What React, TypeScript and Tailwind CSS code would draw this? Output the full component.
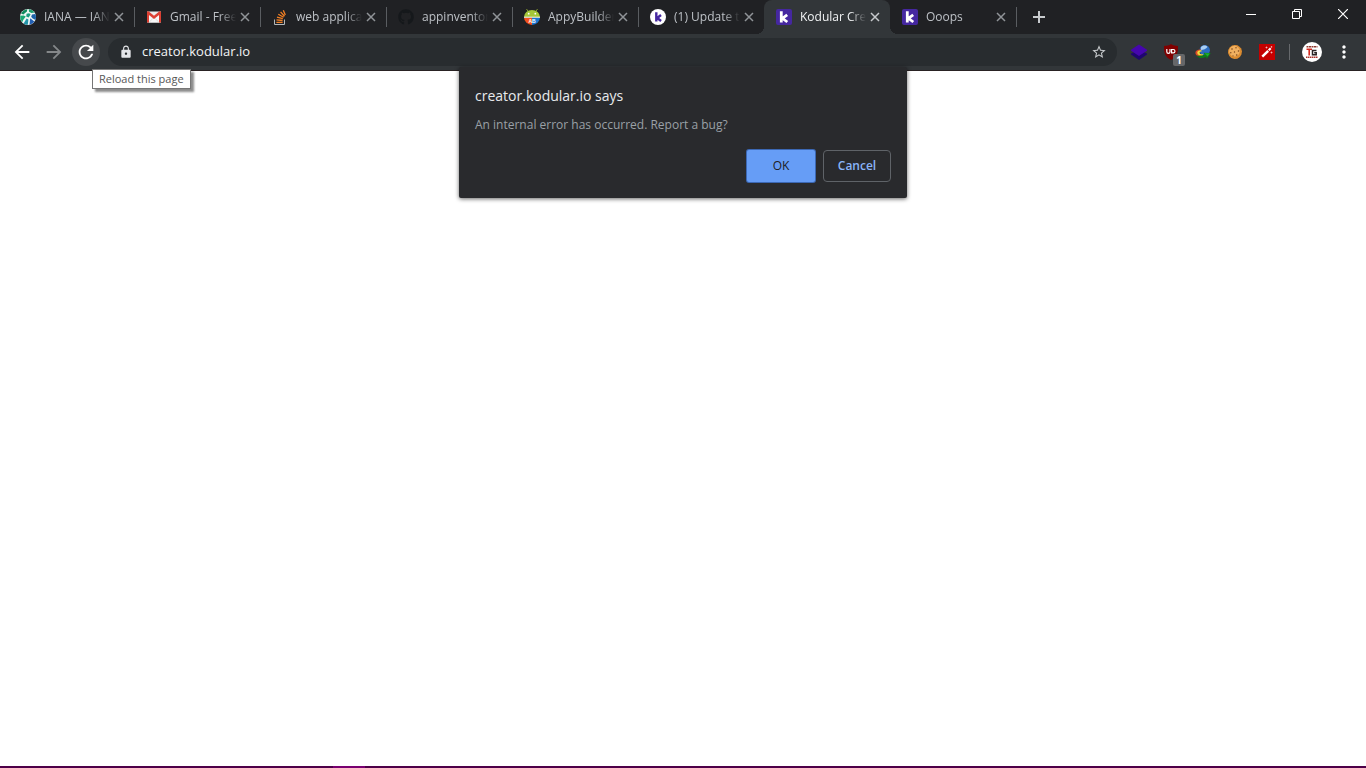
import type { ReactNode } from "react"
import { FaGithub } from "react-icons/fa"
import { MdArrowBack, MdArrowForward, MdLock, MdMoreVert, MdRefresh, MdStarBorder } from "react-icons/md"

interface Tab {
  title: string
  icon: ReactNode
  active?: boolean
  divider?: boolean
}

interface Extension {
  name: string
  icon: ReactNode
}

/* ---------- favicons ---------- */

function IanaIcon() {
  return (
    <svg viewBox="0 0 16 16" className="h-4 w-4">
      <circle cx="8" cy="8" r="8" fill="#eef7f5" />
      <path d="M1 4.600C2.300 2 4.600.5 7.400.2L6.800 2.600 3.400 5.400z" fill="#0f8a5f" />
      <path d="M8.800.2c2.400.2 4.400 1.300 5.800 3.200L11.400 4 9 2.800z" fill="#1fa06f" />
      <path d="M.2 6.800l3.400-.2 2.200 1L3.200 11l-1 2.200C.8 11.400 0 9.200.2 6.800z" fill="#18a874" />
      <path d="M6.600 4.800l2.600-.6 1.400 1.400-2 2.800-2.400-1z" fill="#1b9a80" />
      <path d="M12 5.600l3.300-.6c.8 1.900.9 4 .1 6l-3-1.800-1.200-1.400z" fill="#1c62a8" />
      <path d="M6.600 9.400l1.800 1-.6 5.400c-1.600 0-3-.5-4.200-1.400z" fill="#2193a8" />
      <path d="M10.200 9.200l4.200 3.400c-1.200 1.700-2.900 2.800-4.900 3.200z" fill="#2360b4" />
    </svg>
  )
}

function GmailIcon() {
  return (
    <svg viewBox="0 0 16 16" className="h-4 w-4">
      <path d="M1 2.500h14v11H1z" fill="#ececec" />
      <path d="M3 13.500V6l5 4 5-4v7.500z" fill="#f8f8f8" />
      <path d="M3 13.500l4-4.300M13 13.500L9 9.200" stroke="#cfcfcf" strokeWidth=".7" />
      <path d="M1 13.500V3.200c0-.9 1.100-1.200 1.800-.7L8 6.700l5.200-4.200c.7-.5 1.800-.2 1.800.7v10.300h-2V5.900L8 9.900 3 5.900v7.600z" fill="#dc4033" />
    </svg>
  )
}

function StackIcon() {
  return (
    <svg viewBox="0 0 16 16" className="h-4 w-4" fill="none">
      <path d="M2.500 10.500v5h10v-5" stroke="#b4b8bb" />
      <path
        d="M4.400 13.300h6.200M4.500 10.800l6.100.7M5 8.100l5.800 1.600M6.300 5.300l5.300 3M8.600 2.900l3.900 4.300M11.300 1.200l2 4.800"
        stroke="#f48024"
        strokeWidth="1.300"
      />
    </svg>
  )
}

function AppyIcon() {
  return (
    <svg viewBox="0 0 16 16" className="h-4 w-4">
      <path d="M2.500 0l2 3M13.500 0l-2 3" stroke="#8da42d" strokeWidth=".9" />
      <path d="M0 8a8 7 0 0 1 16 0z" fill="#a4c639" />
      <path d="M0 8.600h8V16A8 7.600 0 0 1 0 8.600z" fill="#f4511e" />
      <path d="M8 8.600h8A8 7.600 0 0 1 8 16z" fill="#1976d2" />
      <path d="M0 7.700h16v1.100H0z" fill="#f1f3e8" />
      <circle cx="4.700" cy="4.700" r=".9" fill="#fff" />
      <circle cx="11.300" cy="4.700" r=".9" fill="#fff" />
      <text x="4.500" y="14" fontSize="5" fontWeight="700" fill="#fff" fontFamily="Liberation Sans, sans-serif">
        AB
      </text>
    </svg>
  )
}

function KodularIcon({ round = false }: { round?: boolean }) {
  return (
    <svg viewBox="0 0 16 16" className="h-4 w-4">
      <rect width="16" height="16" rx={round ? 8 : 2} fill={round ? "#fff" : "#4527a0"} />
      <path
        d={round ? "M6.300 3.200v9.300M11 6L7.200 9l3.900 3" : "M5.300 2.300v11.200M11.200 5.800L6.400 9.300l4.900 3.700"}
        fill="none"
        stroke={round ? "#4527a0" : "#fff"}
        strokeWidth={round ? 2.400 : 2.800}
      />
    </svg>
  )
}

/* ---------- extension icons ---------- */

function LayersIcon() {
  return (
    <svg viewBox="0 0 16 16" className="h-4 w-4">
      <path d="M0 9.500L8 6l8 3.500v1L8 16l-8-5.500z" fill="#1f0670" />
      <path d="M0 5.700L8 .5l8 5.200v1L8 12 0 6.700z" fill="#4606ae" />
    </svg>
  )
}

function ShieldIcon() {
  return (
    <span className="relative block h-4 w-4">
      <svg viewBox="0 0 16 16" className="h-4 w-4">
        <path d="M8 0c2 1.400 4.300 1.900 7 2 .2 6-.8 11-7 14C1.800 13 .8 8 1 2c2.700-.1 5-.6 7-2z" fill="#800000" />
        <path
          d="M3.800 5v2.700a1.500 1.500 0 0 0 3.200 0V5M8.600 5.500v3.300h1.700a1.600 1.600 0 0 0 0-3.300z"
          fill="none"
          stroke="#fff"
          strokeWidth="1.200"
        />
      </svg>
      <span className="absolute left-2.5 top-2.5 flex h-3 w-3 items-center justify-center rounded-xs bg-[#666769] text-[10px] font-bold leading-3 text-white">
        1
      </span>
    </span>
  )
}

function DownloadIcon() {
  return (
    <svg viewBox="0 0 16 16" className="h-4 w-4">
      <circle cx="9.700" cy="6.200" r="5.200" fill="#2c6cc0" />
      <path d="M5.800 3.400C7.500 1 11 1 12.500 3c-1.500 2.200-4 2.800-6.500 3z" fill="#a9cdf2" />
      <path d="M6 5.500C2.500 5.300.3 6.800.4 9c.2 2.400 3 4 6.600 3.800l1-1.300C5 11.700 2.600 10.700 2.700 9c0-1.500 1.500-2.200 3.500-2.200z" fill="#e04a28" />
      <path d="M6.500 6.300C4 6 2 7.200 2.200 9c.2 1.700 2.500 2.900 5.300 2.700l.8-1.400C6.500 10.500 4.500 10 4.600 8.800c0-.9 1-1.400 2-1.400z" fill="#f0dc3a" />
      <path d="M1.200 11c1.800 3.300 6 4 9.800 2l.8 1.900 4-6-7.200-.2 1 1.900c-2.800 1.400-6 1.800-8.400.4z" fill="#0d7a1a" />
      <path d="M9.500 9.300l5.300.1-2.200 3z" fill="#1fae2c" />
    </svg>
  )
}

function CookieIcon() {
  return (
    <svg viewBox="0 0 16 16" className="h-4 w-4">
      <path d="M8 1l2.500.3 2 1.400 1.700 1.900.8 2.900-.6 3-1.500 2.600-2.600 1.600-3 .3-3-1-2-2L1 9l.2-3 1.500-2.600L5 1.600z" fill="#dc8c30" />
      <circle cx="7.500" cy="7.200" r="5.400" fill="#f0b060" />
      <g fill="#7a451c">
        <circle cx="5" cy="5" r=".8" />
        <circle cx="9" cy="3.800" r=".7" />
        <circle cx="11.500" cy="7" r=".8" />
        <circle cx="7.500" cy="8" r=".7" />
        <circle cx="3.800" cy="8.800" r=".7" />
        <circle cx="9.700" cy="11" r=".8" />
        <circle cx="6" cy="11.800" r=".6" />
      </g>
    </svg>
  )
}

function WandIcon() {
  return (
    <svg viewBox="0 0 16 16" className="h-4 w-4">
      <path d="M0 0h16v16H0z" fill="#c40000" />
      <path d="M3.300 12.700L9.200 6.800" stroke="#fff" strokeWidth="2.400" />
      <path d="M9.700 6.300l2-2" stroke="#fff" strokeWidth="2.200" />
      <path d="M7.500 2.500v2M6.500 3.500h2M12.500 2.100v1.600M11.700 2.900h1.600M12.500 7.500v2M11.500 8.500h2" stroke="#f6caca" strokeWidth=".7" />
    </svg>
  )
}

function AvatarIcon() {
  return (
    <svg viewBox="0 0 20 20" className="h-5 w-5">
      <circle cx="10" cy="10" r="10" fill="#fff" />
      <path d="M4.500 4.800h11" stroke="#8e3a30" strokeWidth="1.400" strokeDasharray="2 .5" />
      <path d="M4.500 7.300h5.500M7.200 7.300v6.200" stroke="#d5281d" strokeWidth="1.600" />
      <path d="M14.500 8.600h-4v4.200h3.700v-2h-2" fill="none" stroke="#282424" strokeWidth="1.500" />
      <path d="M4 15.200h12" stroke="#a83028" strokeWidth="1.400" strokeDasharray="1.500 .5" />
    </svg>
  )
}

const TABS: Tab[] = [
  { title: "IANA — IAN", icon: <IanaIcon />, divider: true },
  { title: "Gmail - Free", icon: <GmailIcon />, divider: true },
  { title: "web applica", icon: <StackIcon />, divider: true },
  { title: "appinventor", icon: <FaGithub className="h-4 w-4 text-[#15181b]" />, divider: true },
  { title: "AppyBuilder", icon: <AppyIcon />, divider: true },
  { title: "(1) Update t", icon: <KodularIcon round /> },
  { title: "Kodular Cre", icon: <KodularIcon />, active: true },
  { title: "Ooops", icon: <KodularIcon />, divider: true },
]

const EXTENSIONS: Extension[] = [
  { name: "Layers", icon: <LayersIcon /> },
  { name: "uBlock", icon: <ShieldIcon /> },
  { name: "Download manager", icon: <DownloadIcon /> },
  { name: "Cookies", icon: <CookieIcon /> },
  { name: "Magic wand", icon: <WandIcon /> },
]

function TabItem({ tab }: { tab: Tab }) {
  return (
    <div
      className={`relative flex h-full w-[126px] shrink-0 items-center pl-3 pr-2.5 ${
        tab.active ? "rounded-t-lg bg-[#323639] text-[#f1f3f4]" : "text-[#bdc1c6]"
      }`}
    >
      {tab.active && (
        <>
          <span className="absolute -left-2 bottom-0 h-2 w-2 bg-[radial-gradient(circle_at_0_0,transparent_8px,#323639_8px)]" />
          <span className="absolute -right-2 bottom-0 h-2 w-2 bg-[radial-gradient(circle_at_100%_0,transparent_8px,#323639_8px)]" />
        </>
      )}
      <button type="button" className="flex min-w-0 flex-1 items-center gap-2 text-left">
        <span className="shrink-0">{tab.icon}</span>
        <span className="min-w-0 flex-1 overflow-hidden whitespace-nowrap text-xs mask-r-from-75% mask-r-to-100%">
          {tab.title}
        </span>
      </button>
      <button type="button" aria-label={`Close ${tab.title}`} className="ml-1 shrink-0">
        <svg viewBox="0 0 10 10" className="h-2.5 w-2.5">
          <path
            d="M1 1l8 8M9 1L1 9"
            strokeWidth="1.500"
            className={tab.active ? "stroke-[#c6c9cc]" : "stroke-[#909498]"}
          />
        </svg>
      </button>
      {tab.divider && <span className="absolute right-0 -mr-px h-5 w-px bg-[#5a5d61]" />}
    </div>
  )
}

function TabStrip() {
  return (
    <div className="flex h-[34px] bg-[#202124] pl-2">
      {TABS.map((tab) => (
        <TabItem key={tab.title} tab={tab} />
      ))}
      <button type="button" aria-label="New tab" className="ml-[17px] flex items-center">
        <svg viewBox="0 0 12 12" className="h-3 w-3">
          <path d="M6 0v12M0 6h12" stroke="#c8cbce" strokeWidth="2" />
        </svg>
      </button>
      <div className="ml-auto flex h-7">
        <button type="button" aria-label="Minimize" className="flex w-[46px] items-center justify-center">
          <svg viewBox="0 0 10 10" className="h-2.5 w-2.5">
            <path d="M0 5.500h10" stroke="#fff" />
          </svg>
        </button>
        <button type="button" aria-label="Restore" className="flex w-[46px] items-center justify-center">
          <svg viewBox="0 0 10 10" className="h-2.5 w-2.5" fill="none">
            <path d="M.5 2.500h7v7h-7zM2.500 2.500v-2h7v7h-2" stroke="#fff" />
          </svg>
        </button>
        <button type="button" aria-label="Close window" className="flex w-[46px] items-center justify-center">
          <svg viewBox="0 0 10 10" className="h-2.5 w-2.5">
            <path d="M0 0l10 10M10 0L0 10" stroke="#fff" strokeWidth="1.200" />
          </svg>
        </button>
      </div>
    </div>
  )
}

function Toolbar() {
  return (
    <div className="flex h-[37px] items-center border-b border-[#292223] bg-[#323639] pl-2 pr-3">
      <div className="flex items-center gap-1">
        <button type="button" aria-label="Back" className="flex h-7 w-7 items-center justify-center text-white">
          <MdArrowBack className="h-[22px] w-[22px]" />
        </button>
        <button type="button" aria-label="Forward" className="flex h-7 w-7 items-center justify-center text-[#85888a]">
          <MdArrowForward className="h-[22px] w-[22px]" />
        </button>
        <div className="relative">
          <button
            type="button"
            aria-label="Reload"
            aria-describedby="reload-tip"
            className="flex h-7 w-7 items-center justify-center rounded-full bg-[#46494c] text-white"
          >
            <MdRefresh className="h-[22px] w-[22px]" />
          </button>
          <div
            id="reload-tip"
            role="tooltip"
            className="absolute left-5 top-[31px] z-10 h-5 whitespace-nowrap border border-[#767676] bg-white px-1.5 text-[11px] leading-[18px] text-[#575757] shadow-[3px_3px_2px_rgba(0,0,0,0.45)]"
          >
            Reload this page
          </div>
        </div>
      </div>

      <div className="ml-2 flex h-7 min-w-0 flex-1 items-center rounded-full bg-[#282c2f] pl-[11px] pr-2.5">
        <MdLock className="h-3.5 w-3.5 shrink-0 text-[#e4e6e9]" />
        <input
          type="text"
          aria-label="Address"
          defaultValue="creator.kodular.io"
          className="ml-[9px] min-w-0 flex-1 bg-transparent text-[13px] text-[#f4f5f6] outline-none"
        />
        <button type="button" aria-label="Bookmark this page" className="text-[#c6c9cc]">
          <MdStarBorder className="h-4 w-4" />
        </button>
      </div>

      <div className="ml-1.5 flex items-center">
        {EXTENSIONS.map((ext) => (
          <button key={ext.name} type="button" aria-label={ext.name} className="flex w-8 items-center justify-center">
            {ext.icon}
          </button>
        ))}
        <span className="ml-1.5 h-4 w-px bg-[#66696c]" />
        <button type="button" aria-label="Profile" className="ml-3">
          <AvatarIcon />
        </button>
        <button type="button" aria-label="Menu" className="ml-3 text-white">
          <MdMoreVert className="h-5 w-5" />
        </button>
      </div>
    </div>
  )
}

function AlertDialog() {
  return (
    <div
      role="alertdialog"
      aria-labelledby="alert-title"
      aria-describedby="alert-text"
      className="absolute -top-1 left-1/2 w-[448px] -translate-x-1/2 rounded-xs bg-[#292a2d] px-4 pb-4 pt-[18px] shadow-[0_1px_4px_rgba(0,0,0,0.6)]"
    >
      <h1 id="alert-title" className="text-sm leading-[22px] text-[#e8eaed]">
        creator.kodular.io says
      </h1>
      <p id="alert-text" className="mt-2 text-xs leading-5 text-[#9aa0a6]">
        An internal error has occurred. Report a bug?
      </p>
      <div className="mt-[15px] flex justify-end gap-2 text-xs">
        <button
          type="button"
          className="h-8 w-[68px] rounded-xs bg-[#669df6] text-[#202124] ring-1 ring-[#3c68b4]"
        >
          OK
        </button>
        <button
          type="button"
          className="h-8 w-[68px] rounded-sm border border-[#5f6368] font-semibold text-[#8ab4f8]"
        >
          Cancel
        </button>
      </div>
    </div>
  )
}

export default function App() {
  return (
    <div className="flex min-h-screen flex-col bg-white font-['Open_Sans','Noto_Sans',sans-serif]">
      <header>
        <TabStrip />
        <Toolbar />
      </header>
      <main className="relative flex-1">
        <AlertDialog />
      </main>
      <footer className="flex h-0.5 bg-[#4d0048]">
        <span className="ml-[333px] w-8 bg-[#780070]" />
      </footer>
    </div>
  )
}
